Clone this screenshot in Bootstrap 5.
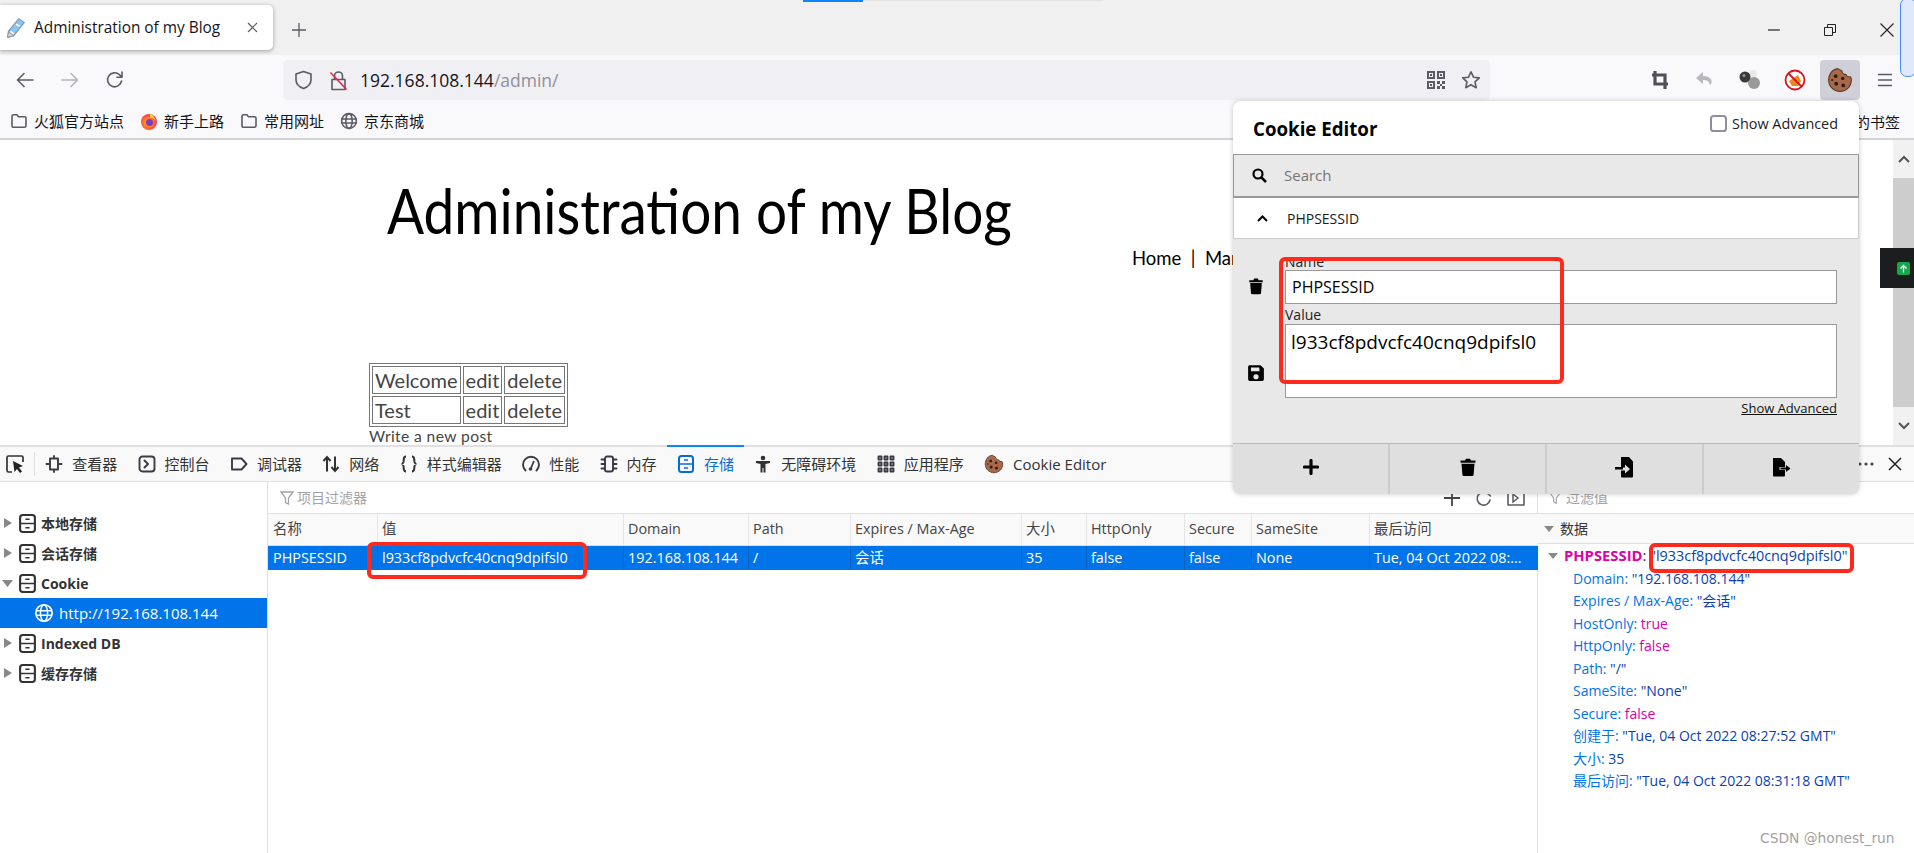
<!DOCTYPE html>
<html lang="zh-CN">
<head>
<meta charset="UTF-8">
<title>Administration of my Blog</title>
<link href="https://cdn.jsdelivr.net/npm/bootstrap@5.3.3/dist/css/bootstrap.min.css" rel="stylesheet">
<style>
  html, body { height: 853px; overflow: hidden; }
  body { font-family: "Open Sans", "Noto Sans CJK SC", sans-serif; font-size: 15px; color: #15141a; background: #fff; }
  svg { display: block; flex: none; }
  #stage { position: relative; width: 1914px; height: 853px; overflow: hidden; }
  .ic { fill: none; stroke: #5b5b66; stroke-width: 1.6; stroke-linecap: round; stroke-linejoin: round; }

  /* browser chrome */
  .tabstrip { height: 55px; background: #f0f0f1; padding-top: 5px; }
  .tabbox { width: 273px; height: 45px; background: #fff; border-radius: 0 5px 5px 0; box-shadow: 0 1px 4px rgba(0,0,0,.35); padding-left: 6px; }
  .tabtitle { margin-left: 8px; width: 213px; font-size: 15.4px; white-space: nowrap; }
  .addtab { margin-left: 18px; }
  .winbtns { margin-left: auto; width: 142px; padding-right: 20px; gap: 44px; justify-content: flex-end; }
  .toolrow { height: 50px; background: #f9f9fb; padding-left: 2px; }
  .navbtn { width: 45px; display: flex; justify-content: center; }
  .urlbar { width: 1207px; height: 40px; margin-left: 146px; background: #f0f0f4; border-radius: 5px; padding: 0 9px 0 11px; }
  .urltext { margin-left: 12px; font-size: 17.5px; }
  .urlpath { color: #8f8f9d; }
  .urlicons { margin-left: auto; gap: 16px; }
  .extbtns { margin-left: 147px; }
  .extcell { width: 45px; display: flex; align-items: center; justify-content: center; }
  .extactive { width: 40px; height: 40px; background: #cfcfd8; border-radius: 4px; }
  .bmrow { height: 35px; background: #f9f9fb; border-bottom: 2px solid #d4d4d6; padding-left: 10px; padding-bottom: 1px; font-size: 15px; gap: 16px; position: relative; }
  .bmitem { gap: 6px; }
  .bmright { position: absolute; left: 1855px; top: 6px; }

  /* blog page */
  .pagearea { height: 305px; }
  .blogbody { flex: 1; padding-left: 369px; font-family: "Lato", "Liberation Sans", sans-serif; overflow: hidden; white-space: nowrap; }
  .blogtitle { margin: 33px 0 0 18px; font-size: 61px; line-height: 76px; font-weight: 400; color: #000; transform: scaleX(.9); transform-origin: left center; }
  .blognav { margin: -3px 0 0 763px; font-size: 18.5px; line-height: 24px; color: #000; }
  .blogtable { margin-top: 93px; border-collapse: separate; border-spacing: 2px; border: 1px solid #777; font-size: 20px; line-height: 24px; color: #444; }
  .blogtable td { border: 1px solid #777; padding: 1px 2px; }
  .blogmore { font-size: 15.6px; line-height: 18px; color: #444; letter-spacing: .4px; }
  .pagescroll { width: 21px; background: #f1f1f1; }
  .scrollend { height: 38px; }
  .scrollthumb { flex: 1; background: #cdcdcd; }
  .greenbtn { position: absolute; left: 1880px; top: 248px; width: 34px; height: 40px; background: #1b1d1e; }
  .greensq { width: 13px; height: 13px; background: #13a84c; border-radius: 2px; color: #fff; margin-left: 17px; }

  /* devtools */
  .dtbar { height: 37px; background: #f9f9fa; border-top: 2px solid #e0e0e2; border-bottom: 1px solid #e0e0e2; font-size: 15px; color: #333; position: relative; }
  .dtbar .ic { stroke: #3a3a44; stroke-width: 1.9; }
  .pickbtn { width: 35px; height: 24px; border-right: 1px solid #e0e0e2; padding-left: 5px; }
  .dttab { height: 100%; padding: 0 10.2px; gap: 9px; white-space: nowrap; }
  .dttab-on { color: #0a6bd8; border-top: 2px solid #0a84ff; margin-top: -2px; height: calc(100% + 2px); }
  .dtend { position: absolute; left: 1858px; top: 0; height: 100%; gap: 14px; }
  .dtpanels { height: 371px; }
  .treeside { width: 268px; border-right: 1px solid #e0e0e2; padding-top: 26px; flex: none; font-weight: 700; font-size: 14px; color: #333; }
  .treeitem { height: 30px; padding-left: 2px; gap: 4px; }
  .treearrow { width: 12px; color: #888; }
  .treeon { background: #0074e8; color: #fff; font-weight: 400; font-size: 15px; padding-left: 34px; gap: 5px; }
  .midpanel { width: 1270px; flex: none; border-right: 1px solid #e0e0e2; }
  .filterrow { height: 32px; padding-left: 12px; gap: 3px; color: #a3a3a8; font-size: 14px; border-bottom: 1px solid #e0e0e2; }
  .filterbtns { margin-left: auto; gap: 14px; padding-right: 12px; }
  .ckt { table-layout: fixed; width: 1270px; margin: 0; border-collapse: collapse; font-size: 14.4px; }
  .ckt th { font-weight: 400; height: 31px; background: #f9f9fa; color: #444; padding: 0 0 0 5px; border-bottom: 1px solid #e0e0e2; vertical-align: middle; box-shadow: inset 1px 0 0 #e6e6e6; white-space: nowrap; overflow: hidden; }
  .ckt th:first-child, .ckt td:first-child { box-shadow: none; }
  .ckt td { height: 25px; background: #0074e8; color: #fff; padding: 0 0 0 5px; box-shadow: inset 1px 0 0 #0a63c0; vertical-align: middle; white-space: nowrap; overflow: hidden; text-overflow: ellipsis; border: 0; }
  .ckt td:last-child { padding-right: 10px; }
  .c1 { width: 109px; } .c2 { width: 246px; } .c3 { width: 125px; } .c4 { width: 102px; } .c5 { width: 171px; }
  .c6 { width: 65px; } .c7 { width: 98px; } .c8 { width: 67px; } .c9 { width: 118px; } .c10 { width: 169px; }
  .detailside { flex: 1; }
  .detailfilter { height: 32px; padding-left: 11px; color: #a3a3a8; font-size: 14px; gap: 5px; border-bottom: 1px solid #e0e0e2; }
  .detailhead { height: 30px; background: #f9f9fa; border-bottom: 1px solid #e0e0e2; padding-left: 6px; gap: 6px; font-size: 14px; color: #333; }
  .detaillist { font-size: 14px; line-height: 22.5px; color: #0074e8; white-space: nowrap; }
  .dk { padding-left: 35px; }
  .dtop { padding-left: 10px; gap: 6px; }
  .dname { color: #dd00a9; font-weight: 700; font-size: 14.8px; }
  .dsep { color: #333; font-weight: 400; }
  .dstr { color: #0a3fae; }
  .dtop .dstr { font-size: 14.4px; font-weight: 400; }
  .dbool { color: #dd00a9; }
  .wmark { position: absolute; left: 1760px; top: 828px; font-family: "DejaVu Sans", sans-serif; font-size: 13.8px; color: #a2a2a2; white-space: nowrap; }

  /* cookie popup */
  .ckpop { position: absolute; left: 1233px; top: 101px; width: 626px; height: 393px; background: #e8e8e8; border-radius: 8px; overflow: hidden; box-shadow: 0 0 5px rgba(0,0,0,.22); }
  .ckhead { height: 53px; background: #fff; padding: 0 21px 0 20px; }
  .cktitle { font-size: 18.7px; font-weight: 700; color: #000; margin-top: 4px; }
  .ckadv { margin-left: auto; margin-top: -8px; font-size: 14.4px; color: #222; gap: 5px; }
  .ckbox { width: 17px; height: 17px; margin: 0; border: 2px solid #8f8f9d; border-radius: 2px; background: #fff; }
  .cksearch { height: 44px; background: #e9e9e9; border: 1px solid #999; border-width: 1px 1px 2px; padding-left: 18px; gap: 17px; color: #757575; }
  .ckrow { height: 41px; background: #fff; border: 1px solid #ccc; border-width: 0 1px 1px; padding-left: 23px; gap: 19px; font-size: 14px; color: #1a1a1a; }
  .ckbody { height: 204px; padding: 14px 22px 0 14px; }
  .ckline { gap: 20px; }
  .cklabel { font-size: 14px; line-height: 17px; color: #222; }
  .ckinput { height: 34px; border: 1px solid #999; border-radius: 0; background: #fff; padding: 0 6px; font-size: 16px; color: #000; box-shadow: none; }
  .ckvalue { margin-top: 2px; }
  .ckvalue .cklabel { margin-bottom: 1px; }
  .savei { margin-bottom: 16px; }
  .ckarea { height: 74px; border: 1px solid #999; border-radius: 0; background: #fff; padding: 2px 5px; font-size: 19px; line-height: 30px; color: #000; box-shadow: none; resize: none; }
  .ckmore { font-size: 13px; line-height: 18px; color: #111; text-decoration: underline; text-align: right; margin-top: 1px; }
  .ckfoot { height: 52px; border-top: 1px solid #bbb; background: #dfdfdf; }
  .ckfbtn { flex: 1; height: 100%; border: 0; border-radius: 0; background: #dfdfdf; padding: 0 0 5px; border-right: 2px solid #ccc; }
  .ckfbtn:last-child { border-right: 0; }

  /* hand drawn red marks */
  .redmark { position: absolute; border: 4px solid #ff2a1c; border-radius: 6px; }
  .rm1 { left: 1279px; top: 257px; width: 285px; height: 127px; }
  .rm2 { left: 367px; top: 542px; width: 220px; height: 37px; }
  .rm3 { left: 1649px; top: 543px; width: 205px; height: 30px; }
  .bluehandle { position: absolute; left: 1900px; top: -2px; width: 16px; height: 79px; background: #dfe9fb; border: 1.5px solid #4a8cf7; border-radius: 7px; }
  .topline { position: absolute; left: 803px; top: 0; width: 60px; height: 2px; background: #0a84ff; }
  .topline2 { position: absolute; left: 863px; top: 0; width: 240px; height: 1px; background: #e3e3e6; }
</style>
</head>
<body>
<svg width="0" height="0" class="position-absolute">
  <defs>
    <radialGradient id="ffg" cx=".45" cy=".55" r=".6"><stop offset="0" stop-color="#ffbd30"/><stop offset=".6" stop-color="#ff6a2b"/><stop offset="1" stop-color="#e8216b"/></radialGradient>
  </defs>
  <symbol id="i-folder" viewBox="0 0 18 18"><path class="ic" d="M2 4.2a1.5 1.5 0 0 1 1.5-1.5h3.4l1.6 2h6a1.5 1.5 0 0 1 1.5 1.5v7.6a1.5 1.5 0 0 1-1.5 1.5h-11A1.5 1.5 0 0 1 2 13.8z"/></symbol>
  <symbol id="i-globe" viewBox="0 0 18 18"><circle class="ic" cx="9" cy="9" r="7.4"/><ellipse class="ic" cx="9" cy="9" rx="3.2" ry="7.4"/><path class="ic" d="M1.8 7h14.4M1.8 11h14.4"/></symbol>
  <symbol id="i-store" viewBox="0 0 18 18"><rect x="2" y="1" width="14" height="16" rx="2.500" fill="none" stroke="currentColor" stroke-width="2"/><path d="M2 9h14M7 5h4M7 13h4" fill="none" stroke="currentColor" stroke-width="1.600"/></symbol>
  <symbol id="i-cookie" viewBox="0 0 24 24"><path d="M10 1.500C4.800 2 1.500 6.800 1.500 12c0 5.900 4.700 10.500 10.500 10.500S22.500 17.900 22.500 12c0-1.200-.3-2.200-.9-3-1.600.4-3.500-.5-4-2-2 0-3.800-1.500-3.900-3.500C12.300 3 11 2 10 1.500z" fill="#a8694a" stroke="#573827" stroke-width="1"/><circle cx="8" cy="8.500" r="1.700" fill="#2e1d13"/><circle cx="14.500" cy="10.500" r="1.600" fill="#2e1d13"/><circle cx="8.500" cy="15.500" r="1.800" fill="#2e1d13"/><circle cx="15" cy="17" r="1.700" fill="#2e1d13"/><circle cx="4.800" cy="12" r="1" fill="#2e1d13"/></symbol>
  <symbol id="i-trash" viewBox="0 0 20 20"><path d="M2.500 3.500h4.600l.8-1.800h4.200l.8 1.800h4.600v2.200h-15zM3.500 6.800h13l-.9 11a1.500 1.500 0 0 1-1.500 1.300H5.900a1.500 1.500 0 0 1-1.500-1.300z" fill="#000"/></symbol>
</svg>

<div id="stage">
  <div class="tabstrip d-flex align-items-start">
    <div class="tabbox d-flex align-items-center">
      <svg width="20" height="22" viewBox="0 0 18 20"><path d="M11.500 1.500l5 3.500-9.500 12-5.500 1.500.6-5.500z" fill="#8cc6ee" stroke="#7b98ad"/><path d="M4 13l3 2.500M9 6.500l3.500 2" stroke="#fff" stroke-width="1.500"/><path d="M1.500 18.500l.6-5 4.900 3.500z" fill="#d8d8d8" stroke="#888" stroke-width=".7"/></svg>
      <span class="tabtitle">Administration of my Blog</span>
      <svg width="11" height="11" viewBox="0 0 11 11"><path d="M1 1l9 9M10 1l-9 9" stroke="#5b5b66" stroke-width="1.200"/></svg>
    </div>
    <svg class="addtab align-self-center" width="16" height="16" viewBox="0 0 16 16"><path d="M8 1v14M1 8h14" stroke="#5b5b66" stroke-width="1.300"/></svg>
    <div class="winbtns d-flex align-items-center align-self-center ms-auto">
      <svg width="12" height="12" viewBox="0 0 12 12"><path d="M0 6h12" stroke="#222" stroke-width="1.200"/></svg>
      <svg width="12" height="12" viewBox="0 0 12 12"><path d="M.5 3.500h8v8h-8zM3.500 3.500v-3h8v8h-3" fill="none" stroke="#222"/></svg>
      <svg width="14" height="14" viewBox="0 0 14 14"><path d="M.5.500l13 13M13.500.500l-13 13" stroke="#222" stroke-width="1.100"/></svg>
    </div>
  </div>

  <div class="toolrow d-flex align-items-center">
    <div class="navbtn"><svg width="20" height="20" viewBox="0 0 20 20"><path class="ic" d="M18 10H3M9 3.500L2.500 10 9 16.500"/></svg></div>
    <div class="navbtn"><svg width="20" height="20" viewBox="0 0 20 20"><path d="M2 10h15M11 3.500l6.500 6.500-6.500 6.500" fill="none" stroke="#b4b4ba" stroke-width="1.600" stroke-linecap="round" stroke-linejoin="round"/></svg></div>
    <div class="navbtn"><svg width="20" height="20" viewBox="0 0 20 20"><path class="ic" d="M16.500 11a7 7 0 1 1-2-6.200L17 7.200M17 2v5.200h-5"/></svg></div>
    <div class="urlbar d-flex align-items-center">
      <svg width="19" height="20" viewBox="0 0 19 20"><path class="ic" d="M9.500 1.500l7.500 2.500v6c0 4-3.500 7-7.500 8.500C5.500 17 2 14 2 10V4z"/></svg>
      <svg class="ms-3" width="19" height="21" viewBox="0 0 19 21"><path class="ic" d="M5.500 9V6a4 4 0 0 1 8 0v3M3 9.500h13v10H3z"/><path d="M1.500 2.500l16 17" stroke="#e22850" stroke-width="1.600"/></svg>
      <span class="urltext">192.168.108.144<span class="urlpath">/admin/</span></span>
      <div class="urlicons d-flex align-items-center">
        <svg width="18" height="18" viewBox="0 0 18 18" fill="#5b5b66"><path fill-rule="evenodd" d="M0 0h8v8H0zM2 2v4h4V2zM10 0h8v8h-8zM12 2v4h4V2zM0 10h8v8H0zM2 12v4h4v-4z"/><path d="M3 3h2v2H3zM13 3h2v2h-2zM3 13h2v2H3zM10 10h3v3h-3zM15 10h3v3h-3zM10 15h3v3h-3zM15 15h3v3h-3zM13 13h2v2h-2z"/></svg>
        <svg width="20" height="20" viewBox="0 0 20 20"><path class="ic" d="M10 1.800l2.500 5.400 5.800.7-4.300 4 1.200 5.800-5.200-2.900-5.200 2.900 1.200-5.800-4.300-4 5.800-.7z"/></svg>
      </div>
    </div>
    <div class="extbtns d-flex align-items-center">
      <div class="extcell"><svg width="18" height="20" viewBox="0 0 18 20"><path d="M4 1v13h13M1 5h13v14" fill="none" stroke="#50505a" stroke-width="3.200"/></svg></div>
      <div class="extcell"><svg width="20" height="18" viewBox="0 0 20 18"><path d="M8 1L1 7l7 6V9c4 0 6 1 7 5 2-2 2-4 1-5.500C14.500 6 11.500 5 8 5z" fill="#b9b9bd"/></svg></div>
      <div class="extcell"><svg width="22" height="22" viewBox="0 0 22 22"><circle cx="14" cy="5" r="4" fill="#e9e9e9"/><circle cx="15" cy="14" r="6" fill="#9a9a9a"/><circle cx="6" cy="8" r="5.500" fill="#3a3a3a"/><circle cx="5" cy="6.500" r="1.500" fill="#999"/></svg></div>
      <div class="extcell"><svg width="22" height="22" viewBox="0 0 22 22"><circle cx="11" cy="11" r="9.500" fill="#fff" stroke="#d8121f" stroke-width="1.800"/><path d="M5 12l9-6 3 6-3 5H8z" fill="#e88a1c"/><path d="M4.500 4.500l13 13" stroke="#d8121f" stroke-width="1.800"/></svg></div>
      <div class="extcell"><div class="extactive d-flex align-items-center justify-content-center"><svg width="26" height="26"><use href="#i-cookie"/></svg></div></div>
      <div class="extcell"><svg width="16" height="14" viewBox="0 0 16 14"><path d="M1 1.500h14M1 7h14M1 12.500h14" stroke="#5b5b66" stroke-width="1.500"/></svg></div>
    </div>
  </div>

  <div class="bmrow d-flex align-items-center">
    <div class="bmitem d-flex align-items-center"><svg width="18" height="18"><use href="#i-folder"/></svg><span>火狐官方站点</span></div>
    <div class="bmitem d-flex align-items-center"><svg width="18" height="18" viewBox="0 0 18 18"><circle cx="9" cy="10" r="8" fill="url(#ffg)"/><circle cx="9.500" cy="10.500" r="3.500" fill="#7d3bc4"/><path d="M10 1c3 2 5 5 6 8-2-2-4-4-6-3z" fill="#ffcf3c"/></svg><span>新手上路</span></div>
    <div class="bmitem d-flex align-items-center"><svg width="18" height="18"><use href="#i-folder"/></svg><span>常用网址</span></div>
    <div class="bmitem d-flex align-items-center"><svg width="18" height="18"><use href="#i-globe"/></svg><span>京东商城</span></div>
    <span class="bmright">的书签</span>
  </div>

  <div class="pagearea d-flex">
    <div class="blogbody">
      <h1 class="blogtitle">Administration of my Blog</h1>
      <div class="blognav">Home&nbsp;&nbsp;|&nbsp;&nbsp;Manage</div>
      <table class="blogtable">
        <tr><td>Welcome</td><td>edit</td><td>delete</td></tr>
        <tr><td>Test</td><td>edit</td><td>delete</td></tr>
      </table>
      <div class="blogmore">Write a new post</div>
    </div>
    <div class="pagescroll d-flex flex-column">
      <div class="scrollend d-flex align-items-center justify-content-center"><svg width="12" height="8" viewBox="0 0 12 8"><path d="M1 7l5-5 5 5" fill="none" stroke="#555" stroke-width="2"/></svg></div>
      <div class="scrollthumb"></div>
      <div class="scrollend d-flex align-items-center justify-content-center"><svg width="12" height="8" viewBox="0 0 12 8"><path d="M1 1l5 5 5-5" fill="none" stroke="#555" stroke-width="2"/></svg></div>
    </div>
  </div>

  <div class="dtbar d-flex align-items-center">
    <div class="pickbtn d-flex align-items-center"><svg width="20" height="20" viewBox="0 0 20 20"><path d="M7 18H3.500A1.500 1.500 0 0 1 2 16.500v-13A1.500 1.500 0 0 1 3.500 2h13A1.500 1.500 0 0 1 18 3.500V8" fill="none" stroke="#333" stroke-width="1.700"/><path d="M8 7l10 5-4 1.500 3 4-2 1.500-3-4-2.500 3z" fill="#222"/></svg></div>
    <div class="dttab d-flex align-items-center"><svg width="18" height="18" viewBox="0 0 18 18"><path class="ic" d="M5 3.500h8v11H5zM9 1v2.500M9 14.500V17M1.500 9H5M13 9h3.500"/></svg>查看器</div>
    <div class="dttab d-flex align-items-center"><svg width="18" height="18" viewBox="0 0 18 18"><rect class="ic" x="1.500" y="1.500" width="15" height="15" rx="3"/><path class="ic" d="M6.500 5.500L10 9l-3.500 3.500"/></svg>控制台</div>
    <div class="dttab d-flex align-items-center"><svg width="18" height="18" viewBox="0 0 18 18"><path class="ic" d="M2 3.500h9.500L16.500 9l-5 5.500H2z"/></svg>调试器</div>
    <div class="dttab d-flex align-items-center"><svg width="18" height="18" viewBox="0 0 18 18"><path d="M5 16.500V2M1.500 6L5 2l3.500 4M13 1.500V16M9.500 12l3.500 4 3.500-4" fill="none" stroke="#333" stroke-width="2"/></svg>网络</div>
    <div class="dttab d-flex align-items-center"><svg width="18" height="18" viewBox="0 0 18 18"><path d="M6 1.500c-3 0-2 3-2.500 5.500C3.200 8.200 2.500 9 1.500 9c1 0 1.700.8 2 2 .5 2.500-.5 5.500 2.500 5.500M12 1.500c3 0 2 3 2.500 5.500.3 1.200 1 2 2 2-1 0-1.700.8-2 2-.5 2.500.5 5.500-2.500 5.500" fill="none" stroke="#333" stroke-width="2"/></svg>样式编辑器</div>
    <div class="dttab d-flex align-items-center"><svg width="18" height="18" viewBox="0 0 18 18"><path class="ic" d="M3.500 15.500a8 8 0 1 1 11 0"/><path d="M9 13l3-7" stroke="#3a3a44" stroke-width="1.800"/><circle cx="8.500" cy="14" r="1.800" fill="#3a3a44"/></svg>性能</div>
    <div class="dttab d-flex align-items-center"><svg width="18" height="18" viewBox="0 0 18 18"><rect class="ic" x="5" y="1.500" width="8" height="15" rx="2"/><path class="ic" d="M1.500 4.500H5M1.500 9H5M1.500 13.500H5M13 4.500h3.500M13 9h3.500M13 13.500h3.500"/></svg>内存</div>
    <div class="dttab dttab-on d-flex align-items-center"><svg width="18" height="18"><use href="#i-store"/></svg>存储</div>
    <div class="dttab d-flex align-items-center"><svg width="18" height="18" viewBox="0 0 18 18" fill="#333"><circle cx="9" cy="3" r="2.300"/><path d="M2 6h14v2l-4.500 1v8.500h-2V13h-1v4.500h-2V9L2 8z"/></svg>无障碍环境</div>
    <div class="dttab d-flex align-items-center"><svg width="18" height="18" viewBox="0 0 18 18"><path class="ic" d="M1.500 1.500h3v3h-3zM7.500 1.500h3v3h-3zM13.500 1.500h3v3h-3zM1.500 7.500h3v3h-3zM7.500 7.500h3v3h-3zM13.500 7.500h3v3h-3zM1.500 13.500h3v3h-3zM7.500 13.500h3v3h-3zM13.500 13.500h3v3h-3z"/></svg>应用程序</div>
    <div class="dttab d-flex align-items-center"><svg width="20" height="20"><use href="#i-cookie"/></svg>Cookie Editor</div>
    <div class="dtend d-flex align-items-center">
      <svg width="16" height="4" viewBox="0 0 16 4" fill="#444"><circle cx="2" cy="2" r="1.600"/><circle cx="8" cy="2" r="1.600"/><circle cx="14" cy="2" r="1.600"/></svg>
      <svg width="14" height="14" viewBox="0 0 14 14"><path d="M1 1l12 12M13 1L1 13" stroke="#222" stroke-width="1.500"/></svg>
    </div>
  </div>

  <div class="dtpanels d-flex">
    <div class="treeside">
      <div class="treeitem d-flex align-items-center"><svg class="treearrow" width="8" height="10" viewBox="0 0 12 10"><path d="M2 0l8 5-8 5z" fill="#888"/></svg><svg width="19" height="19"><use href="#i-store"/></svg><span>本地存储</span></div>
      <div class="treeitem d-flex align-items-center"><svg class="treearrow" width="8" height="10" viewBox="0 0 12 10"><path d="M2 0l8 5-8 5z" fill="#888"/></svg><svg width="19" height="19"><use href="#i-store"/></svg><span>会话存储</span></div>
      <div class="treeitem d-flex align-items-center"><svg class="treearrow" width="8" height="10" viewBox="0 0 12 10"><path d="M0 2h11L5.500 9z" fill="#888"/></svg><svg width="19" height="19"><use href="#i-store"/></svg><span>Cookie</span></div>
      <div class="treeitem treeon d-flex align-items-center"><svg width="20" height="20" viewBox="0 0 18 18"><circle cx="9" cy="9" r="7.400" fill="none" stroke="#fff" stroke-width="1.500"/><ellipse cx="9" cy="9" rx="3.200" ry="7.400" fill="none" stroke="#fff" stroke-width="1.300"/><path d="M1.800 7h14.400M1.800 11h14.400" stroke="#fff" stroke-width="1.300"/></svg><span>http://192.168.108.144</span></div>
      <div class="treeitem d-flex align-items-center"><svg class="treearrow" width="8" height="10" viewBox="0 0 12 10"><path d="M2 0l8 5-8 5z" fill="#888"/></svg><svg width="19" height="19"><use href="#i-store"/></svg><span>Indexed DB</span></div>
      <div class="treeitem d-flex align-items-center"><svg class="treearrow" width="8" height="10" viewBox="0 0 12 10"><path d="M2 0l8 5-8 5z" fill="#888"/></svg><svg width="19" height="19"><use href="#i-store"/></svg><span>缓存存储</span></div>
    </div>

    <div class="midpanel">
      <div class="filterrow d-flex align-items-center">
        <svg width="14" height="14" viewBox="0 0 14 14"><path d="M1 1h12L8.500 7v6l-3-1.500V7z" fill="none" stroke="#a3a3a8" stroke-width="1.300"/></svg>
        <span>项目过滤器</span>
        <div class="filterbtns d-flex align-items-center">
          <svg width="18" height="18" viewBox="0 0 18 18"><path d="M9 1v16M1 9h16" stroke="#444" stroke-width="1.800"/></svg>
          <svg width="18" height="18" viewBox="0 0 18 18"><path class="ic" d="M15 11a6.500 6.500 0 1 1-1.800-6l2.300 2"/></svg>
          <svg width="18" height="18" viewBox="0 0 18 18"><rect class="ic" x="1" y="2" width="16" height="14"/><path d="M6 5l5 4-5 4z" fill="none" stroke="#5b5b66" stroke-width="1.500"/></svg>
        </div>
      </div>
      <table class="ckt">
        <colgroup><col class="c1"><col class="c2"><col class="c3"><col class="c4"><col class="c5"><col class="c6"><col class="c7"><col class="c8"><col class="c9"><col class="c10"></colgroup>
        <thead><tr><th>名称</th><th>值</th><th>Domain</th><th>Path</th><th>Expires / Max-Age</th><th>大小</th><th>HttpOnly</th><th>Secure</th><th>SameSite</th><th>最后访问</th></tr></thead>
        <tbody><tr><td>PHPSESSID</td><td>l933cf8pdvcfc40cnq9dpifsl0</td><td>192.168.108.144</td><td>/</td><td>会话</td><td>35</td><td>false</td><td>false</td><td>None</td><td>Tue, 04 Oct 2022 08:31:18 GMT</td></tr></tbody>
      </table>
    </div>

    <div class="detailside">
      <div class="detailfilter d-flex align-items-center">
        <svg width="12" height="14" viewBox="0 0 14 14"><path d="M1 1h12L8.500 7v6l-3-1.500V7z" fill="none" stroke="#a3a3a8" stroke-width="1.300"/></svg>
        <span>过滤值</span>
      </div>
      <div class="detailhead d-flex align-items-center"><svg width="10" height="8" viewBox="0 0 11 9"><path d="M0 1h11L5.500 8z" fill="#888"/></svg><span>数据</span></div>
      <div class="detaillist">
        <div class="dtop d-flex align-items-center"><svg width="10" height="8" viewBox="0 0 11 9"><path d="M0 1h11L5.500 8z" fill="#888"/></svg><span class="dname">PHPSESSID<span class="dsep">:</span> <span class="dstr">"l933cf8pdvcfc40cnq9dpifsl0"</span></span></div>
        <div class="dk">Domain: <span class="dstr">"192.168.108.144"</span></div>
        <div class="dk">Expires / Max-Age: <span class="dstr">"会话"</span></div>
        <div class="dk">HostOnly: <span class="dbool">true</span></div>
        <div class="dk">HttpOnly: <span class="dbool">false</span></div>
        <div class="dk">Path: <span class="dstr">"/"</span></div>
        <div class="dk">SameSite: <span class="dstr">"None"</span></div>
        <div class="dk">Secure: <span class="dbool">false</span></div>
        <div class="dk">创建于: <span class="dstr">"Tue, 04 Oct 2022 08:27:52 GMT"</span></div>
        <div class="dk">大小: <span class="dstr">35</span></div>
        <div class="dk">最后访问: <span class="dstr">"Tue, 04 Oct 2022 08:31:18 GMT"</span></div>
      </div>
    </div>
  </div>

  <div class="greenbtn d-flex align-items-center"><div class="greensq d-flex align-items-center justify-content-center"><svg width="9" height="9" viewBox="0 0 9 9"><path d="M4.500 8.500V1.500M1.500 4.500l3-3 3 3" fill="none" stroke="#fff" stroke-width="1.300"/></svg></div></div>

  <div class="ckpop">
    <div class="ckhead d-flex align-items-center">
      <span class="cktitle">Cookie Editor</span>
      <label class="ckadv d-flex align-items-center"><input type="checkbox" class="ckbox form-check-input"><span>Show Advanced</span></label>
    </div>
    <div class="cksearch d-flex align-items-center">
      <svg width="15" height="15" viewBox="0 0 15 15"><circle cx="6" cy="6" r="4.500" fill="none" stroke="#000" stroke-width="2.200"/><path d="M9.500 9.500l4.500 4.500" stroke="#000" stroke-width="2.500"/></svg>
      <span>Search</span>
    </div>
    <div class="ckrow d-flex align-items-center">
      <svg width="11" height="7" viewBox="0 0 11 7"><path d="M1 6l4.500-4.500L10 6" fill="none" stroke="#000" stroke-width="2"/></svg>
      <span>PHPSESSID</span>
    </div>
    <div class="ckbody">
      <div class="ckline d-flex align-items-end">
        <svg class="mb-2" width="18" height="20"><use href="#i-trash"/></svg>
        <div class="flex-grow-1"><div class="cklabel">Name</div><input class="ckinput form-control" value="PHPSESSID"></div>
      </div>
      <div class="ckline ckvalue d-flex align-items-end">
        <svg class="savei" width="18" height="18" viewBox="0 0 16 16"><path fill-rule="evenodd" d="M2 1h10l3 3v9.500a1.500 1.500 0 0 1-1.500 1.500h-11A1.500 1.500 0 0 1 1 13.500v-11A1.500 1.500 0 0 1 2 1zM3.500 3v3.500h7.500V3zM8 9a2.300 2.300 0 1 0 0 4.600A2.300 2.300 0 0 0 8 9z" fill="#000"/></svg>
        <div class="flex-grow-1"><div class="cklabel">Value</div><textarea class="ckarea form-control">l933cf8pdvcfc40cnq9dpifsl0</textarea></div>
      </div>
      <div class="ckmore">Show Advanced</div>
    </div>
    <div class="ckfoot d-flex">
      <button class="ckfbtn btn d-flex align-items-center justify-content-center"><svg width="16" height="16" viewBox="0 0 16 16"><path d="M8 1.500v13M1.500 8h13" stroke="#000" stroke-width="3.200" stroke-linecap="round"/></svg></button>
      <button class="ckfbtn btn d-flex align-items-center justify-content-center"><svg width="20" height="22"><use href="#i-trash"/></svg></button>
      <button class="ckfbtn btn d-flex align-items-center justify-content-center"><svg width="19" height="22" viewBox="0 0 19 22"><path d="M6 1h8l4 4.500v15a1 1 0 0 1-1 1H7a1 1 0 0 1-1-1v-6h4v3l5-4.500-5-4.500v3H6z" fill="#000"/><path d="M0 11h8v2.500H0z" fill="#000"/></svg></button>
      <button class="ckfbtn btn d-flex align-items-center justify-content-center"><svg width="19" height="20" viewBox="0 0 19 20"><path d="M1 1h8l4 4v5H7.500v3H13v5.500a1 1 0 0 1-1 1H2a1 1 0 0 1-1-1z" fill="#000"/><path d="M8.500 10.500H14V8l4.500 3.500L14 15v-2.500H8.500z" fill="#000"/></svg></button>
    </div>
  </div>

  <div class="redmark rm1"></div>
  <div class="redmark rm2"></div>
  <div class="redmark rm3"></div>
  <div class="wmark">CSDN @honest_run</div>
  <div class="bluehandle"></div>
  <div class="topline"></div>
  <div class="topline2"></div>
</div>
<script src="https://cdn.jsdelivr.net/npm/bootstrap@5.3.3/dist/js/bootstrap.bundle.min.js"></script>
</body>
</html>
